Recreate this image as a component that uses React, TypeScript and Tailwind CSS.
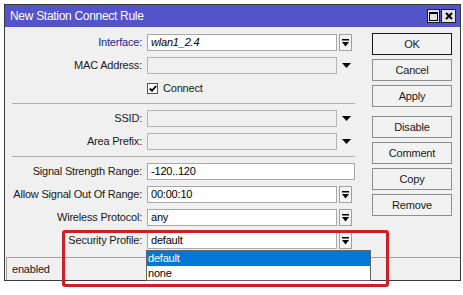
import React from 'react';

const font = { fontFamily: '"Liberation Sans", Arial, sans-serif' };

function DropBtn() {
  return (
    <div className="ml-[2px] w-[13px] h-[17px] border border-[#a0a0a0] bg-[#f4f4f4] flex items-center justify-center">
      <svg width="7" height="8" viewBox="0 0 7 8">
        <rect x="0" y="0" width="7" height="1.5" fill="#000" />
        <path d="M0 3 L7 3 L3.5 7.5 Z" fill="#000" />
      </svg>
    </div>
  );
}

function Arrow() {
  return (
    <div className="w-[18px] h-[17px] flex items-center justify-center">
      <svg width="9" height="5" viewBox="0 0 9 5">
        <path d="M0 0 L9 0 L4.5 5 Z" fill="#000" />
      </svg>
    </div>
  );
}

function Row({ label, children, blue }: { label: string; children: React.ReactNode; blue?: boolean }) {
  return (
    <div className="flex items-center h-[17px]">
      <div className={`w-[138px] text-right pr-[1px] whitespace-nowrap ${blue ? 'text-[#1e1e8c]' : 'text-[#1a1a1a]'}`}>{label}</div>
      <div className="ml-[4px] flex items-center">{children}</div>
    </div>
  );
}

function Field({ value = '', w = 190, disabled, italic }: { value?: string; w?: number; disabled?: boolean; italic?: boolean }) {
  return (
    <div
      className={`h-[17px] border flex items-center pl-[3px] text-black ${disabled ? 'bg-[#f0f0f0] border-[#b4b4b4]' : 'bg-white border-[#a8a8a8]'} ${italic ? 'italic' : ''}`}
      style={{ width: w }}
    >
      {value}
    </div>
  );
}

function Sep() {
  return <div className="ml-[7px] w-[343px] h-px bg-[#b0b0b0]" />;
}

function Btn({ label, main }: { label: string; main?: boolean }) {
  return (
    <div className={`w-[80px] h-[22px] border flex items-center justify-center bg-[#f2f2f2] text-[#1a1a1a] ${main ? 'border-[#1a1a1a]' : 'border-[#8c8c8c]'}`}>
      {label}
    </div>
  );
}

export default function App() {
  return (
    <div className="relative w-[463px] h-[295px] bg-white overflow-hidden text-[11px] tracking-[-0.2px]" style={font}>
      <div className="ml-[4px] mt-[4px] w-[457px] h-[277px] border border-[#3a3a3a] bg-[#f0f0f0] flex flex-col">
        {/* title bar */}
        <div className="h-[22px] bg-[#5353ca] flex items-center pl-[5px] pr-[4px]">
          <span className="text-white text-[12px] tracking-[-0.3px]">New Station Connect Rule</span>
          <div className="ml-auto flex gap-[1px]">
            <div className="w-[13px] h-[14px] bg-[#e4e4e4] border border-[#202020] flex items-center justify-center">
              <div className="w-[9px] h-[9px] border border-black border-t-2" />
            </div>
            <div className="w-[15px] h-[14px] bg-[#e4e4e4] border border-[#202020] flex items-center justify-center">
              <svg width="8" height="8" viewBox="0 0 8 8">
                <path d="M1 1 L7 7 M7 1 L1 7" stroke="#000" strokeWidth="2" />
              </svg>
            </div>
          </div>
        </div>

        {/* body */}
        <div className="flex h-[230px]">
          <div className="w-[351px] pt-[7px] flex flex-col gap-[6px]">
            <Row label="Interface:" blue>
              <Field value="wlan1_2.4" italic />
              <DropBtn />
            </Row>
            <Row label="MAC Address:">
              <Field disabled />
              <Arrow />
            </Row>
            <div className="flex items-center h-[17px] pl-[142px]">
              <div className="w-[11px] h-[11px] border border-[#555] bg-white flex items-center justify-center">
                <svg width="8" height="7" viewBox="0 0 8 7">
                  <path d="M0.8 3.5 L3 5.7 L7.2 1" stroke="#000" strokeWidth="1.8" fill="none" />
                </svg>
              </div>
              <span className="ml-[5px] text-[#1a1a1a]">Connect</span>
            </div>
            <Sep />
            <Row label="SSID:">
              <Field disabled />
              <Arrow />
            </Row>
            <Row label="Area Prefix:">
              <Field disabled />
              <Arrow />
            </Row>
            <Sep />
            <Row label="Signal Strength Range:">
              <Field value="-120..120" w={208} />
            </Row>
            <Row label="Allow Signal Out Of Range:">
              <Field value="00:00:10" />
              <DropBtn />
            </Row>
            <Row label="Wireless Protocol:">
              <Field value="any" />
              <DropBtn />
            </Row>
            <Row label="Security Profile:">
              <Field value="default" />
              <DropBtn />
            </Row>
          </div>
          <div className="ml-[16px] pt-[6px] flex flex-col gap-[4px]">
            <Btn label="OK" main />
            <Btn label="Cancel" />
            <Btn label="Apply" />
            <div className="mt-[5px]">
              <Btn label="Disable" />
            </div>
            <Btn label="Comment" />
            <Btn label="Copy" />
            <Btn label="Remove" />
          </div>
        </div>

        {/* status bar */}
        <div className="ml-[1px] h-[23px] border-t border-l border-[#a0a0a0] flex items-center pl-[5px] text-[#1a1a1a]">
          enabled
        </div>
      </div>

      {/* open dropdown list */}
      <div className="absolute left-[146px] top-[250px] w-[225px] h-[31px] bg-white border border-[#646464]">
        <div className="h-[15px] bg-[#0078d7] text-white flex items-center pl-[1px]">default</div>
        <div className="h-[14px] text-black flex items-center pl-[1px]">none</div>
      </div>

      {/* highlight annotation */}
      <div className="absolute left-[62px] top-[230px] w-[327px] h-[57px] border-[3px] border-[#cf1f25] rounded-[3px]" />
    </div>
  );
}
